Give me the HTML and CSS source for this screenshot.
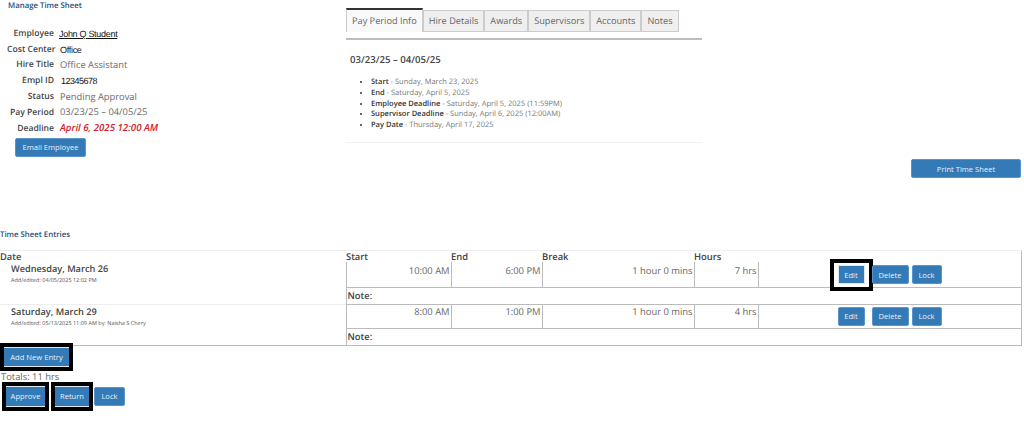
FILE: index.html
```html
<!DOCTYPE html>
<html lang="en">
<head>
<meta charset="utf-8">
<title>Manage Time Sheet</title>
<link rel="stylesheet" href="styles.css">
</head>
<body>
<div class="top">
  <section class="summary">
    <h2 class="section-title">Manage Time Sheet</h2>
    <dl class="facts">
      <dt>Employee</dt><dd class="pasted link">John Q Student</dd>
      <dt>Cost Center</dt><dd class="pasted">Office</dd>
      <dt>Hire Title</dt><dd>Office Assistant</dd>
      <dt>Empl ID</dt><dd class="pasted id">12345678</dd>
      <dt>Status</dt><dd>Pending Approval</dd>
      <dt>Pay Period</dt><dd>03/23/25 – 04/05/25</dd>
      <dt>Deadline</dt><dd class="deadline">April 6, 2025 12:00 AM</dd>
    </dl>
    <button class="btn email">Email Employee</button>
  </section>
  <section class="tabs-panel">
    <nav class="tabs">
      <span class="tab active">Pay Period Info</span>
      <span class="tab">Hire Details</span>
      <span class="tab">Awards</span>
      <span class="tab">Supervisors</span>
      <span class="tab">Accounts</span>
      <span class="tab">Notes</span>
    </nav>
    <div class="panel">
      <h3>03/23/25 – 04/05/25</h3>
      <ul>
        <li><b>Start</b> - Sunday, March 23, 2025</li>
        <li><b>End</b> - Saturday, April 5, 2025</li>
        <li><b>Employee Deadline</b> - Saturday, April 5, 2025 (11:59PM)</li>
        <li><b>Supervisor Deadline</b> - Sunday, April 6, 2025 (12:00AM)</li>
        <li><b>Pay Date</b> - Thursday, April 17, 2025</li>
      </ul>
    </div>
  </section>
</div>
<div class="print-row"><button class="btn print">Print Time Sheet</button></div>
<h2 class="section-title entries-title">Time Sheet Entries</h2>
<table class="entries">
  <colgroup>
    <col class="c-date"><col class="c-start"><col class="c-end"><col class="c-break"><col class="c-hours"><col>
  </colgroup>
  <thead>
    <tr><th>Date</th><th>Start</th><th>End</th><th>Break</th><th>Hours</th><th></th></tr>
  </thead>
  <tbody>
    <tr class="main">
      <td class="day" rowspan="2"><strong>Wednesday, March 26</strong><small>Add/edited: 04/05/2025 12:02 PM</small></td>
      <td class="num">10:00 AM</td><td class="num">6:00 PM</td><td class="num">1 hour 0 mins</td><td class="num">7 hrs</td>
      <td class="acts"><div class="act-row"><button class="btn b-edit boxed">Edit</button><button class="btn b-delete">Delete</button><button class="btn b-lock">Lock</button></div></td>
    </tr>
    <tr class="note"><td colspan="5">Note:</td></tr>
    <tr class="main">
      <td class="day" rowspan="2"><strong>Saturday, March 29</strong><small>Add/edited: 05/13/2025 11:09 AM by: Naisha S Chery</small></td>
      <td class="num">8:00 AM</td><td class="num">1:00 PM</td><td class="num">1 hour 0 mins</td><td class="num">4 hrs</td>
      <td class="acts"><div class="act-row"><button class="btn b-edit">Edit</button><button class="btn b-delete">Delete</button><button class="btn b-lock">Lock</button></div></td>
    </tr>
    <tr class="note"><td colspan="5">Note:</td></tr>
  </tbody>
</table>
<div class="add-row"><button class="btn add boxed">Add New Entry</button></div>
<p class="totals">Totals: 11 hrs</p>
<div class="final-row">
  <button class="btn approve boxed">Approve</button>
  <button class="btn return boxed">Return</button>
  <button class="btn b-lock final-lock">Lock</button>
</div>
</body>
</html>
```
FILE: styles.css
```css
* { box-sizing: border-box; }
html, body { margin: 0; height: 422px; overflow: hidden; }
body {
  background: #fff;
  color: #666;
  font-family: "Open Sans", "Noto Sans", sans-serif;
  font-size: 11px;
  text-rendering: geometricPrecision;
}
.top { display: flex; height: 159px; }
.summary { width: 346px; padding-left: 8px; }
.section-title {
  margin: 0;
  font-size: 7.8px;
  line-height: 12px;
  font-weight: 600;
  color: #1f4e79;
}
.facts {
  display: grid;
  grid-template-columns: 47px auto;
  grid-auto-rows: 15.8px;
  column-gap: 6px;
  margin: 13px 0 0 -1px;
  align-items: center;
}
.facts dt {
  text-align: right;
  font-size: 8.6px;
  font-weight: 600;
  color: #444;
  white-space: nowrap;
}
.facts dd { margin: 0; font-size: 9.35px; color: #6b6b6b; white-space: nowrap; }
.facts dd.pasted { font-family: "Liberation Sans", sans-serif; font-size: 9px; color: #111; letter-spacing: -0.3px; padding-top: 2px; }
.facts dd.link { text-decoration: underline; margin-left: -1px; }
.facts dd.id { padding-left: 1px; letter-spacing: -0.5px; }
.facts dd.deadline { color: #d0222c; font-style: italic; font-weight: 600; font-size: 9.7px; }
.btn {
  position: relative;
  display: block;
  height: 19px;
  padding: 0;
  border: 1px solid #5a94c8;
  border-radius: 2px;
  background: #337ab7;
  color: #e8f0f8;
  font-family: "Open Sans", "Noto Sans", sans-serif;
  font-size: 7.6px;
  line-height: 16px;
  white-space: nowrap;
}
.boxed { border-color: #dfe9f3; border-radius: 0; }
.boxed::after {
  content: "";
  position: absolute;
  top: -7px;
  right: -9px;
  bottom: -8px;
  left: -9px;
  border: 4px solid #000;
  pointer-events: none;
}
.email { width: 71px; margin: 2px 0 0 7px; }
.tabs-panel { width: 356px; padding-top: 8px; }
.tabs {
  display: flex;
  height: 32px;
  padding-top: 2px;
  border-bottom: 2px solid #bdbdbd;
  align-items: flex-start;
}
.tab {
  height: 22px;
  padding: 0 5px;
  border: 1px solid #ccc;
  background: #efefef;
  font-size: 9.2px;
  line-height: 20px;
  color: #666;
  white-space: nowrap;
}
.tab.active {
  height: 24px;
  margin-top: -2px;
  border-top: 2px solid #333;
  border-bottom: 0;
  background: #f9f9f9;
  line-height: 22px;
}
.panel {
  height: 103px;
  padding: 13px 0 0 4px;
  border-bottom: 1px solid #f2f2f2;
}
.panel h3 {
  margin: 0;
  font-size: 9.65px;
  line-height: 14px;
  font-weight: 600;
  color: #444;
}
.panel ul { margin: 10px 0 0; padding: 0 0 0 21px; list-style: disc; }
.panel li { font-size: 7.5px; line-height: 10.8px; color: #777; white-space: nowrap; }
.panel li::marker { color: #333; }
.panel b { font-weight: 600; color: #333; }
.print-row { display: flex; justify-content: flex-end; padding-right: 3px; height: 70px; }
.print { width: 110px; }
.entries-title { height: 21px; line-height: 13px; }
.entries {
  width: 1022px;
  table-layout: fixed;
  border-collapse: collapse;
  border-right: 1px solid #bbb;
  border-bottom: 1px solid #bbb;
}
.c-date { width: 346px; }
.c-start { width: 105px; }
.c-end { width: 91px; }
.c-break { width: 152px; }
.c-hours { width: 64px; }
.entries thead { border-top: 1px solid #eee; }
.entries th {
  height: 11px;
  padding: 0;
  text-align: left;
  font-size: 9.4px;
  line-height: 11px;
  font-weight: 600;
  color: #444;
}
.entries td { padding: 0; vertical-align: top; }
.entries td.day { padding-left: 11px; }
.day strong { display: block; font-size: 9.2px; line-height: 14px; font-weight: 600; color: #444; }
.day small { display: block; font-size: 5.5px; line-height: 8px; color: #555; }
.main { height: 25px; }
.main:nth-child(3) { height: 24px; }
.main:nth-child(3) .day { border-top: 1px solid #eee; }
.entries td.num {
  border-left: 1px solid #bbb;
  border-bottom: 1px solid #bbb;
  padding: 2px 1px 0 0;
  text-align: right;
  font-size: 9.4px;
  line-height: 14px;
  color: #666;
}
.main:nth-child(3) .num,
.main:nth-child(3) .acts { border-top: 1px solid #bbb; }
.entries .main:nth-child(3) td.num { padding-top: 0; }
.entries td.acts { border-left: 1px solid #bbb; border-bottom: 1px solid #bbb; padding: 3px 0 0 79px; }
.entries .main:nth-child(3) td.acts { padding-top: 2px; }
.act-row { display: flex; height: 19px; }
.b-edit { width: 27px; margin-right: 7px; }
.b-delete { width: 37px; margin-right: 3px; }
.b-lock { width: 30px; }
.note td {
  height: 16px;
  border-left: 1px solid #bbb;
  font-size: 9.4px;
  line-height: 16px;
  font-weight: 600;
  color: #444;
}
.entries .note td { padding-left: 1px; }
.entries .note:last-child td { height: 15px; }
.add-row { padding: 1px 0 0 3px; height: 24px; }
.add { width: 67px; height: 20px; }
.add::after { top: -5px; right: -4px; bottom: -5px; left: -4px; }
.totals { margin: 0; font-size: 9.4px; line-height: 13px; color: #666; padding-left: 1px; }
.final-row { display: flex; align-items: center; padding: 3px 0 0 5px; }
.approve { width: 41px; height: 21px; margin-right: 8px; }
.return { width: 36px; height: 21px; margin-right: 4px; }
.approve::after, .return::after { top: -5px; right: -4px; bottom: -5px; left: -4px; }
.final-lock { width: 31px; }
```
